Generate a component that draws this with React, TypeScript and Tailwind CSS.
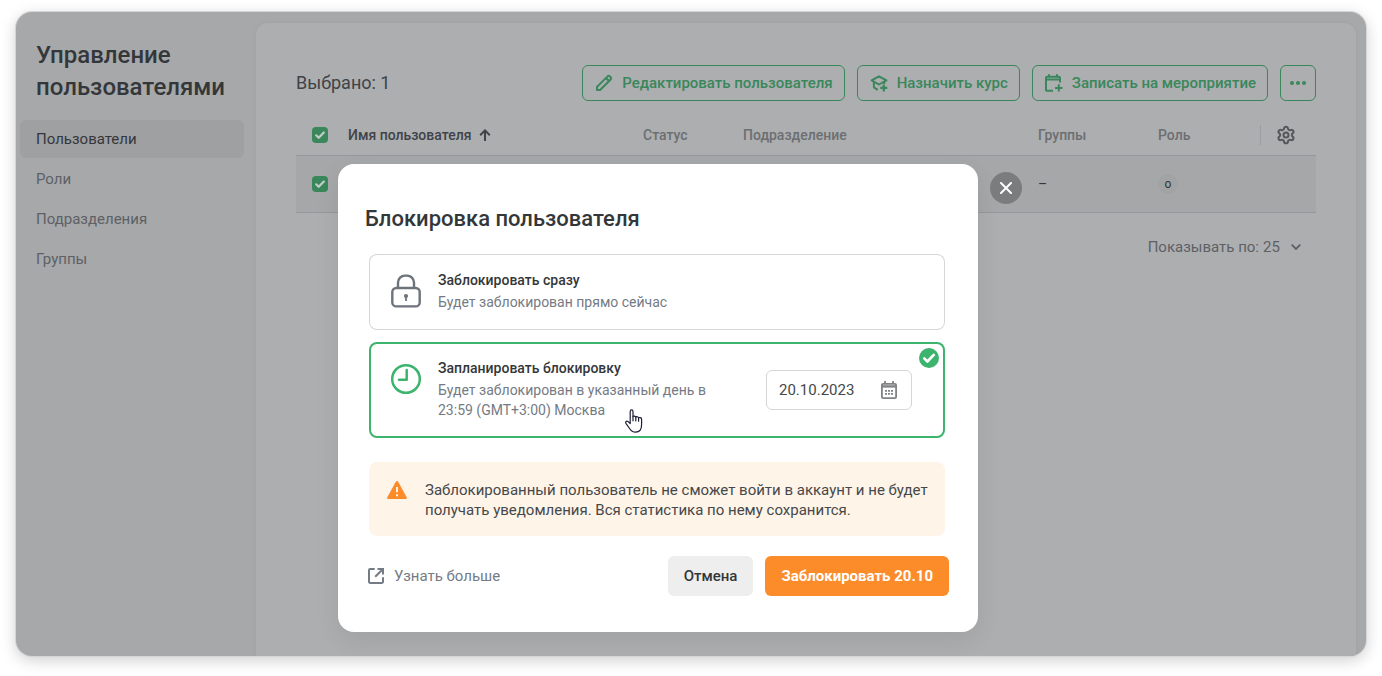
import React from "react";
import { Settings } from "lucide-react";

type IconProps = {
  className?: string;
};

const navItems = ["Пользователи", "Роли", "Подразделения", "Группы"];

function CheckMark({ className = "" }: IconProps) {
  return (
    <svg viewBox="0 0 16 16" fill="none" className={className} aria-hidden="true">
      <path
        d="M4.2 8.3l2.500 2.500L11.800 5.500"
        stroke="currentColor"
        strokeWidth="2.2"
        strokeLinecap="round"
        strokeLinejoin="round"
      />
    </svg>
  );
}

function PencilIcon() {
  return (
    <svg
      viewBox="0 0 20 20"
      fill="none"
      stroke="currentColor"
      strokeWidth="2"
      strokeLinejoin="round"
      className="size-5 shrink-0"
      aria-hidden="true"
    >
      <path d="M3 17v-3.1L13.3 3.6a2 2 0 0 1 2.8 0l.3.3a2 2 0 0 1 0 2.8L6.1 17H3z" />
      <path d="M12.2 5.2l2.600 2.600" />
    </svg>
  );
}

function CourseIcon() {
  return (
    <svg
      viewBox="0 0 20 20"
      fill="none"
      stroke="currentColor"
      strokeWidth="2"
      className="size-5 shrink-0"
      aria-hidden="true"
    >
      <path d="M2.6 7.4L10 3.3l7.4 4.1L10 11.5 2.6 7.4z" strokeLinejoin="round" />
      <path d="M4.9 8.9v5.4l3.9 2.5M15.2 8.9v2" strokeLinejoin="round" />
      <path d="M14.8 11.4v7M11.3 14.9h7" strokeWidth="2.2" />
    </svg>
  );
}

function EventIcon() {
  return (
    <svg
      viewBox="0 0 20 20"
      fill="none"
      stroke="currentColor"
      strokeWidth="2"
      className="size-5 shrink-0"
      aria-hidden="true"
    >
      <path d="M9 17.800H3.300A1.300 1.300 0 0 1 2 16.500V5a1.300 1.300 0 0 1 1.300-1.300h11.400A1.300 1.300 0 0 1 16 5v4.400" />
      <path d="M2 6.500h14M5 1.200v3M13 1.200v3" />
      <path d="M14.8 11.2v7.4M11.1 14.9h7.4" />
    </svg>
  );
}

function DotsIcon() {
  return (
    <svg viewBox="0 0 18 4" fill="currentColor" className="h-1 w-[18px]" aria-hidden="true">
      <circle cx="3" cy="2" r="2" />
      <circle cx="9" cy="2" r="2" />
      <circle cx="15" cy="2" r="2" />
    </svg>
  );
}

function ArrowUpIcon() {
  return (
    <svg
      viewBox="0 0 12 12"
      fill="none"
      stroke="currentColor"
      strokeWidth="2"
      className="size-3"
      aria-hidden="true"
    >
      <path d="M6 12V1.4M1.2 6.200L6 1.400l4.800 4.800" />
    </svg>
  );
}

function LockIcon() {
  return (
    <svg
      viewBox="0 0 32 36"
      fill="none"
      stroke="currentColor"
      strokeWidth="2.4"
      className="mt-[3px] h-9 w-8 shrink-0 text-[#6d737b]"
      aria-hidden="true"
    >
      <rect x="2.3" y="15" width="27.4" height="18.4" rx="4" />
      <path d="M8 15V9.6A7 7 0 0 1 15 2.6h2a7 7 0 0 1 7 7V15" />
      <circle cx="16" cy="23" r="2.1" fill="currentColor" stroke="none" />
      <path d="M16 23v5" strokeWidth="1.8" />
    </svg>
  );
}

function ClockIcon() {
  return (
    <svg
      viewBox="0 0 32 36"
      fill="none"
      stroke="currentColor"
      strokeWidth="2.500"
      className="mt-[3px] h-9 w-8 shrink-0 text-[#3cb46e]"
      aria-hidden="true"
    >
      <circle cx="16" cy="18" r="13.8" />
      <path d="M16.700 9v9.700H9" strokeLinecap="round" strokeLinejoin="round" />
    </svg>
  );
}

function CalendarIcon() {
  return (
    <svg viewBox="0 0 16 18" className="h-[18px] w-4 text-[#808285]" fill="none" aria-hidden="true">
      <rect x="0.9" y="2.9" width="14.2" height="14.2" rx="1.2" stroke="currentColor" strokeWidth="1.8" />
      <path d="M1 5.400h14" stroke="currentColor" strokeWidth="2.400" />
      <path d="M4 0v3M12 0v3" stroke="currentColor" strokeWidth="1.8" />
      <path
        d="M4 9.900h2M7 9.900h2M10 9.900h2M4 12.900h2M7 12.900h2M10 12.900h2"
        stroke="currentColor"
        strokeWidth="1.800"
      />
    </svg>
  );
}

function WarningIcon() {
  return (
    <svg viewBox="0 0 20 18" className="mt-px h-[18px] w-5 shrink-0" aria-hidden="true">
      <path
        d="M8.8.8a1.4 1.4 0 0 1 2.4 0l8.5 15.4a1.2 1.2 0 0 1-1.1 1.8H1.4a1.2 1.2 0 0 1-1.1-1.8L8.8.8z"
        fill="#fc8c2a"
      />
      <path d="M10 6v5.2M10 13.2v2" stroke="#fff4e8" strokeWidth="1.9" />
    </svg>
  );
}

function ExternalIcon() {
  return (
    <svg
      viewBox="0 0 16 16"
      fill="none"
      stroke="currentColor"
      strokeWidth="2"
      className="size-4"
      aria-hidden="true"
    >
      <path d="M6.7 1H2.2A1.2 1.2 0 0 0 1 2.2v11.6A1.2 1.2 0 0 0 2.2 15h11.6a1.2 1.2 0 0 0 1.2-1.2V9.3" />
      <path d="M9.5 1H15v5.5M15 1L7.2 8.8" />
    </svg>
  );
}

function HandCursor() {
  return (
    <svg
      viewBox="0 0 18 24"
      className="pointer-events-none absolute top-[67px] left-[256px] h-6 w-[18px]"
      aria-hidden="true"
    >
      <path
        d="M5.2 14.6V2.4C5.2 1.3 5.8.8 6.6.8S8 1.3 8 2.4v5.2c.3-.8 2.6-.8 2.8.6.5-.8 2.6-.6 2.8.7.6-.7 3-.4 3 1.4v5.3c0 4.7-2.2 7.6-6 7.6-3.4 0-4.7-1.5-6-3.7L.9 14.3c-.8-1.5.7-2.7 2-1.9l2.3 2.2z"
        fill="#ffffff"
        stroke="#1d1d35"
        strokeWidth="1.2"
        strokeLinejoin="round"
      />
      <path d="M8 7.6v4.2M10.8 8.2V12M13.6 9v3.2" stroke="#1d1d35" strokeWidth="1.2" strokeLinecap="round" />
    </svg>
  );
}

function Checkbox({ label }: { label: string }) {
  return (
    <span className="relative block size-4">
      <input
        type="checkbox"
        defaultChecked
        aria-label={label}
        className="block size-4 appearance-none rounded bg-[#39875b]"
      />
      <CheckMark className="pointer-events-none absolute inset-0 size-4 text-[#c3cdc8]" />
    </span>
  );
}

type ToolbarButtonProps = {
  icon: React.ReactNode;
  children: React.ReactNode;
};

function ToolbarButton({ icon, children }: ToolbarButtonProps) {
  return (
    <button
      type="button"
      className="flex h-9 items-center gap-2 rounded-md border border-[#39875b] px-[11px] text-[15px] font-medium whitespace-nowrap text-[#39875b]"
    >
      {icon}
      {children}
    </button>
  );
}

function Sidebar() {
  return (
    <aside className="w-60 shrink-0 pt-[27px]">
      <h1 className="px-5 text-2xl font-medium text-[#34373a]">Управление пользователями</h1>
      <nav className="mt-[17px] flex flex-col gap-0.5 pr-3 pl-1">
        {navItems.map((item, index) => (
          <a
            key={item}
            href="#"
            className={
              index === 0
                ? "flex h-[38px] items-center rounded-md bg-[#9fa0a2] px-4 text-[15px] text-[#34373a]"
                : "flex h-[38px] items-center rounded-md px-4 text-[15px] text-[#5d6165]"
            }
          >
            {item}
          </a>
        ))}
      </nav>
    </aside>
  );
}

function UsersTable() {
  return (
    <table className="mt-3.5 w-full table-fixed border-collapse text-left text-sm">
      <thead>
        <tr className="h-10 border-b border-[#96979a] text-[#6c6f72]">
          <th className="w-10 pl-4">
            <Checkbox label="Выбрать всех" />
          </th>
          <th className="px-3 font-medium text-[#404347]">
            <span className="flex items-center gap-2">
              Имя пользователя
              <ArrowUpIcon />
            </span>
          </th>
          <th className="w-[100px] px-3 font-medium">Статус</th>
          <th className="px-3 font-medium">Подразделение</th>
          <th className="w-[120px] px-3 font-medium">Группы</th>
          <th className="w-[114px] px-3 font-medium">Роль</th>
          <th className="w-14">
            <button
              type="button"
              aria-label="Настройки таблицы"
              className="flex h-5 w-full items-center border-l border-[#9c9da0] pl-[15px] text-[#54585d]"
            >
              <Settings size={20} strokeWidth={2.4} />
            </button>
          </th>
        </tr>
      </thead>
      <tbody>
        <tr className="h-[57px] border-b border-[#96979a] bg-[#a6a7a9]">
          <td className="pl-4">
            <Checkbox label="Выбрать пользователя" />
          </td>
          <td />
          <td />
          <td />
          <td className="px-3 text-[#34373a]">–</td>
          <td className="px-3">
            <span className="flex size-5 items-center justify-center rounded-full bg-[#a2a3a5] text-xs text-[#34373a]">
              о
            </span>
          </td>
          <td />
        </tr>
      </tbody>
    </table>
  );
}

function BlockDialog() {
  return (
    <div
      role="dialog"
      aria-labelledby="dialog-title"
      className="w-[640px] rounded-2xl bg-white pt-[41px] pr-[29px] pb-9 pl-[27px] shadow-[0_8px_24px_rgba(0,0,0,0.08)]"
    >
      <h2 id="dialog-title" className="text-[22px] leading-7 font-medium text-[#34373a]">
        Блокировка пользователя
      </h2>

      <div className="mx-1 mt-[21px] flex flex-col gap-3">
        <label className="flex gap-4 rounded-lg px-[21px] pt-4 pb-[18px] inset-ring inset-ring-[#d5d6d8]">
          <input type="radio" name="block" className="sr-only" />
          <LockIcon />
          <span className="flex flex-col gap-0.5 text-sm">
            <span className="font-medium text-[#34373a]">Заблокировать сразу</span>
            <span className="text-[#757b84]">Будет заблокирован прямо сейчас</span>
          </span>
        </label>

        <div className="relative flex gap-12 rounded-lg pt-4 pr-[33px] pb-[18px] pl-[21px] inset-ring-2 inset-ring-[#3cb46e]">
          <label className="flex flex-1 gap-4">
            <input type="radio" name="block" defaultChecked className="sr-only" />
            <ClockIcon />
            <span className="flex flex-col gap-0.5 text-sm">
              <span className="font-medium text-[#34373a]">Запланировать блокировку</span>
              <span className="text-[#757b84]">
                Будет заблокирован в указанный день в 23:59 (GMT+3:00) Москва
              </span>
            </span>
          </label>
          <div className="mt-3 flex h-10 w-[146px] items-center rounded-md border border-[#d5d6d8] pr-3.5 pl-3">
            <input
              type="text"
              defaultValue="20.10.2023"
              aria-label="Дата блокировки"
              className="min-w-0 flex-1 text-[15px] text-[#45484b] outline-none"
            />
            <CalendarIcon />
          </div>
          <span className="absolute top-1.5 right-1.5 rounded-full bg-[#3cb46e] text-white">
            <CheckMark className="size-5" />
          </span>
          <HandCursor />
        </div>
      </div>

      <div className="mx-1 mt-6 flex gap-[18px] rounded-lg bg-[#fff4e8] pt-[18px] pr-4 pb-4 pl-[18px]">
        <WarningIcon />
        <p className="text-[15px] leading-5 text-[#45484b]">
          Заблокированный пользователь не сможет войти в аккаунт и не будет получать уведомления. Вся
          статистика по нему сохранится.
        </p>
      </div>

      <div className="mt-5 flex items-center gap-3 pl-[3px] text-[15px]">
        <a href="#" className="mr-auto flex items-center gap-2.5 text-[#757b84]">
          <ExternalIcon />
          Узнать больше
        </a>
        <button type="button" className="h-10 rounded-md bg-[#eeeeee] px-4 font-medium text-[#34373a]">
          Отмена
        </button>
        <button type="button" className="h-10 rounded-md bg-[#fc8c2a] px-4 font-bold text-white">
          Заблокировать 20.10
        </button>
      </div>
    </div>
  );
}

function App() {
  return (
    <div className="flex min-h-screen bg-white px-4 pt-3 pb-5 font-[Roboto,sans-serif]">
      <div className="relative flex flex-1 overflow-hidden rounded-2xl bg-[#a7a8aa] shadow-[0_0_0_1px_#d4d5d6,0_4px_16px_rgba(0,0,0,0.2)]">
        <Sidebar />

        <main className="mt-[11px] mr-2.5 flex-1 rounded-t-xl bg-[#adaeb0] px-10 pt-[42px] shadow-[0_0_4px_rgba(0,0,0,0.05)]">
          <div className="flex items-center gap-3">
            <p className="mr-auto text-lg text-[#404347]">Выбрано: 1</p>
            <ToolbarButton icon={<PencilIcon />}>Редактировать пользователя</ToolbarButton>
            <ToolbarButton icon={<CourseIcon />}>Назначить курс</ToolbarButton>
            <ToolbarButton icon={<EventIcon />}>Записать на мероприятие</ToolbarButton>
            <button
              type="button"
              aria-label="Ещё"
              className="flex size-9 items-center justify-center rounded-md border border-[#39875b] text-[#39875b]"
            >
              <DotsIcon />
            </button>
          </div>

          <UsersTable />

          <div className="mt-[23px] flex items-center justify-end gap-1 pr-3.5 text-[15px] text-[#5d6165]">
            <label htmlFor="page-size">Показывать по:</label>
            <span className="relative flex items-center">
              <select id="page-size" className="w-[39px] appearance-none">
                <option>25</option>
                <option>50</option>
              </select>
              <svg
                viewBox="0 0 10 6"
                fill="none"
                stroke="currentColor"
                strokeWidth="1.8"
                className="pointer-events-none absolute right-px h-1.5 w-2.5"
                aria-hidden="true"
              >
                <path d="M.7.7L5 5 9.3.7" />
              </svg>
            </span>
          </div>
        </main>

        <div className="absolute inset-0 flex items-start justify-center gap-3 pt-[152px] pr-[22px]">
          <BlockDialog />
          <button
            type="button"
            aria-label="Закрыть"
            className="mt-2 flex size-8 items-center justify-center rounded-full bg-[#7b7c7e] text-white"
          >
            <svg
              viewBox="0 0 12 12"
              fill="none"
              stroke="currentColor"
              strokeWidth="2"
              strokeLinecap="round"
              className="size-3"
              aria-hidden="true"
            >
              <path d="M1 1l10 10M11 1L1 11" />
            </svg>
          </button>
        </div>
      </div>
    </div>
  );
}

export default App;
